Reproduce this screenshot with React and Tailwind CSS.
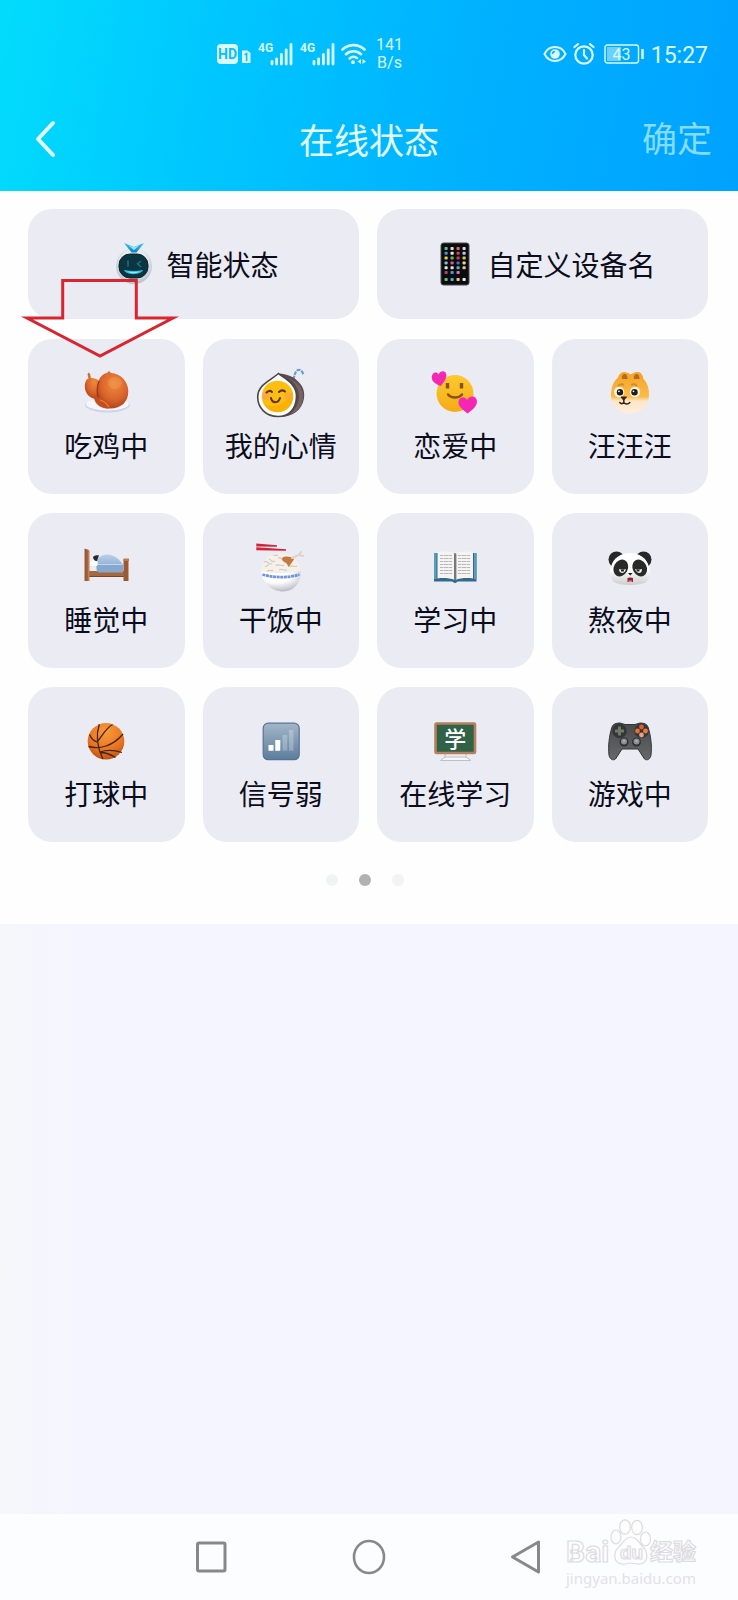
import React, { useState } from 'react';
import { clsx } from 'clsx';

const statuses = [
    { label: '吃鸡中', Icon: ChickenIcon },
    { label: '我的心情', Icon: MoodIcon },
    { label: '恋爱中', Icon: LoveIcon },
    { label: '汪汪汪', Icon: DogIcon },
    { label: '睡觉中', Icon: BedIcon },
    { label: '干饭中', Icon: RiceIcon },
    { label: '学习中', Icon: BookIcon },
    { label: '熬夜中', Icon: PandaIcon },
    { label: '打球中', Icon: BallIcon },
    { label: '信号弱', Icon: WeakSignalIcon },
    { label: '在线学习', Icon: BoardIcon },
    { label: '游戏中', Icon: GamepadIcon },
];

export default function App() {
    const [page, setPage] = useState(1);

    return (
        <div className="flex min-h-screen flex-col bg-[#f5f6fd] font-['Roboto','Noto_Sans_CJK_SC',sans-serif]">
            <header className="bg-[linear-gradient(100deg,#02dcfc_0%,#00c6ff_30%,#00b2ff_62%,#00a2ff_100%)] text-white">
                <StatusBar />
                <div className="grid h-[101px] grid-cols-3 items-center px-[26px]">
                    <button aria-label="返回" className="justify-self-start px-2 pb-1">
                        <svg width="22" height="38" viewBox="0 0 22 38" fill="none" stroke="#e6fdff" strokeWidth="4" strokeLinecap="round" strokeLinejoin="round">
                            <path d="M19 3 4 19l15 16" />
                        </svg>
                    </button>
                    <h1 className="pt-1 text-center text-[35px] leading-[48px] whitespace-nowrap text-[#e6fdff]">在线状态</h1>
                    <button className="justify-self-end text-[35px] leading-[48px] text-[#86dcff]">确定</button>
                </div>
            </header>

            <main className="relative bg-[#fefefe] pt-[18px] pr-[30px] pb-[38px] pl-7">
                <div className="grid grid-cols-2 gap-[18px]">
                    <WideCard label="智能状态" Icon={RobotIcon} />
                    <WideCard label="自定义设备名" Icon={PhoneIcon} />
                </div>
                <div className="mt-5 grid grid-cols-4 gap-x-[18px] gap-y-[19px]">
                    {statuses.map(({ label, Icon }) => (
                        <button key={label} className="flex h-[155px] flex-col items-center gap-3 rounded-3xl bg-[#ebecf3] pt-[30px] text-[#0b0d1c]">
                            <Icon />
                            <span className="text-[28px] leading-[38px] whitespace-nowrap">{label}</span>
                        </button>
                    ))}
                </div>
                <div className="mt-8 flex justify-center gap-[21px] pr-1.5">
                    {[0, 1, 2].map((i) => (
                        <button
                            key={i}
                            aria-label={`第${i + 1}页`}
                            onClick={() => setPage(i)}
                            className={clsx('size-3 rounded-full', i === page ? 'bg-[#b1b1b3]' : 'bg-[#f2f3f3]')}
                        />
                    ))}
                </div>
                <PointerArrow />
            </main>

            <div className="flex-1 bg-linear-to-r from-[#f6f7fb] to-[#f4f5fe] to-10%" />

            <NavBar />
        </div>
    );
}

function StatusBar() {
    return (
        <div className="flex h-[90px] items-center justify-between pt-[17px] pr-[30px] pl-[217px] text-[#d9fbff]">
            <div className="flex items-center">
                <span className="flex h-5 w-[21px] items-center justify-center rounded-sm bg-[#d9fbff] text-sm font-bold text-[#12b9fb]">HD</span>
                <svg className="ml-[3px]" width="10" height="20" viewBox="0 0 10 20">
                    <path d="M1 6.5h5.5L9.5 9v10H1z" fill="#d9fbff" />
                    <path d="M3.6 10.7 5.6 9.6V17" fill="none" stroke="#12b9fb" strokeWidth="1.6" />
                </svg>
                <Signal />
                <Signal />
                <svg className="ml-1.5" width="25" height="22" viewBox="0 0 25 22" fill="none" stroke="currentColor" strokeWidth="2.6" strokeLinecap="round">
                    <path d="M1.5 6.5a16 16 0 0 1 22 0M5 11.2a11 11 0 0 1 15 0M8.6 15.4a6 6 0 0 1 7.4-.4" />
                    <circle cx="12" cy="19.2" r="1.9" fill="currentColor" stroke="none" />
                    <path d="M20 16v5l-3.5-2.5zM21.5 16v5l3.5-2.5z" fill="currentColor" stroke="none" />
                </svg>
                <div className="ml-2.5 text-center text-base leading-[18px]">
                    <div>141</div>
                    <div>B/s</div>
                </div>
            </div>
            <div className="flex items-center">
                <svg width="24" height="20" viewBox="0 0 24 20" fill="none" stroke="currentColor" strokeWidth="2">
                    <path d="M1.5 10C6 .8 18 .8 22.5 10 18 19.2 6 19.2 1.5 10z" />
                    <circle cx="12" cy="10" r="4.8" fill="currentColor" stroke="none" />
                    <path d="M9.5 10A2.5 2.5 0 0 1 12 7.5" stroke="#06aefe" strokeWidth="1.4" />
                </svg>
                <svg className="ml-1.5" width="22" height="24" viewBox="0 0 22 24" fill="none" stroke="currentColor" strokeWidth="2.2" strokeLinecap="round">
                    <circle cx="11" cy="13" r="8.7" />
                    <path d="M11 8v5l3 3.5M1.5 5 5 2.2M20.5 5 17 2.2" />
                </svg>
                <svg className="ml-[9px]" width="41" height="20" viewBox="0 0 41 20">
                    <rect x="1" y="1" width="33.5" height="18" rx="2.5" fill="none" stroke="currentColor" strokeWidth="1.4" />
                    <rect x="3" y="3" width="14" height="14" fill="#6fcfff" />
                    <path d="M38.5 5v10" stroke="currentColor" strokeWidth="2.5" />
                    <text x="17.5" y="15.5" textAnchor="middle" fontSize="16" fontFamily="Roboto, sans-serif" fill="currentColor">43</text>
                </svg>
                <span className="ml-1.5 pt-1 text-[23px] leading-7">15:27</span>
            </div>
        </div>
    );
}

function Signal() {
    return (
        <svg className="ml-1.5 overflow-visible" width="36" height="24" viewBox="0 0 36 24">
            <text x="1" y="10" fontSize="12" fontWeight="700" fontFamily="Roboto, sans-serif" fill="currentColor">4G</text>
            <path d="M15 19.5V22M19.6 17v5M24.4 12.5V22M29.2 8v14M34 2.5V22" stroke="currentColor" strokeWidth="2.8" strokeLinecap="round" />
        </svg>
    );
}

function WideCard({ label, Icon }) {
    return (
        <button className="flex h-[110px] items-center justify-center gap-2.5 rounded-3xl bg-[#ebecf3] pl-1 text-[#0b0d1c]">
            <Icon />
            <span className="pt-1.5 text-[28px] leading-[38px] whitespace-nowrap">{label}</span>
        </button>
    );
}

function PointerArrow() {
    return (
        <svg className="pointer-events-none absolute top-[86px] left-[22px] overflow-visible" width="156" height="84" viewBox="0 0 156 84" fill="none" stroke="#d9252f" strokeWidth="3" strokeMiterlimit="10">
            <path d="M40.7 3.500h73.6v37.500H151L78 79 5 41h35.700z" />
        </svg>
    );
}

function NavBar() {
    return (
        <nav className="relative flex h-[86px] items-center justify-center gap-[123px] bg-[#fcfdff] text-[#88888a]">
            <button aria-label="最近任务">
                <svg width="34" height="36" viewBox="0 0 34 36" fill="none" stroke="currentColor" strokeWidth="3">
                    <rect x="2.5" y="4" width="27.5" height="28" rx="1.5" />
                </svg>
            </button>
            <button aria-label="主屏幕">
                <svg width="34" height="36" viewBox="0 0 34 36" fill="none" stroke="currentColor" strokeWidth="2.6">
                    <ellipse cx="17" cy="18" rx="15" ry="16" />
                </svg>
            </button>
            <button aria-label="后退">
                <svg width="34" height="36" viewBox="0 0 34 36" fill="none" stroke="currentColor" strokeWidth="3" strokeLinejoin="round">
                    <path d="M29.5 3v30L3.5 18z" />
                </svg>
            </button>
            <Watermark />
        </nav>
    );
}

function Watermark() {
    return (
        <div className="absolute right-10 bottom-3 w-[132px] font-['Noto_Sans','Noto_Sans_CJK_SC',sans-serif]">
            <svg className="overflow-visible" width="132" height="51" viewBox="0 0 132 51" stroke="#dcdcdf" strokeWidth="1.2" fill="#fdfdfe">
                <text x="0" y="45" fontSize="30" fontWeight="700" fontFamily="Roboto, sans-serif">Bai</text>
                <ellipse cx="50" cy="20" rx="5" ry="7" />
                <ellipse cx="59" cy="10" rx="5.3" ry="7.2" />
                <ellipse cx="71" cy="10.5" rx="5.3" ry="7.2" />
                <ellipse cx="79.5" cy="22" rx="5" ry="7" />
                <path d="M65 20c6 0 8 6 12 10 5 5 6 16-3 17-4 .5-6-1-9-1s-5 1.5-9 1c-9-1-9-12-3-17 4-4 6-10 12-10z" />
                <text x="54" y="42" fontSize="19" fontWeight="700" fontFamily="'Liberation Sans', sans-serif">du</text>
                <text x="84" y="43" fontSize="23" fontWeight="700" fontFamily="'Noto Sans CJK SC', sans-serif">经验</text>
            </svg>
            <a href="#jingyan" className="block text-[15px] leading-5 text-[#e2e2e5]">jingyan.baidu.com</a>
        </div>
    );
}

function IconFrame({ children }) {
    return (
        <svg width="48" height="48" viewBox="0 0 48 48" fill="none" className="shrink-0 overflow-visible" aria-hidden="true">
            {children}
        </svg>
    );
}

function RobotIcon() {
    return (
        <svg width="44" height="44" viewBox="0 0 44 44" className="shrink-0" aria-hidden="true">
            <defs>
                <radialGradient id="robotHead" cx=".5" cy=".4" r=".6">
                    <stop offset=".6" stopColor="#e6edf1" />
                    <stop offset="1" stopColor="#b3bfc9" />
                </radialGradient>
                <linearGradient id="robotHorn" x2="0" y2="1">
                    <stop stopColor="#36c3f2" />
                    <stop offset="1" stopColor="#157fc0" />
                </linearGradient>
            </defs>
            <circle cx="22" cy="24" r="18" fill="url(#robotHead)" />
            <path d="M12 1 22 5l10-4-7.500 9.500h-5z" fill="url(#robotHorn)" />
            <path d="m16 3 6 5 6-5-6 2.200z" fill="#8fe7ff" />
            <rect x="7" y="12" width="29" height="24" rx="11" fill="#0b3540" stroke="#12242c" />
            <path d="M16 18.500v6M29 19l-3.500 2.700L29 25" fill="none" stroke="#23717f" strokeWidth="1.5" />
            <path d="M12 28q10 2 19 0c-2 5.500-17 5.500-19 0z" fill="#31c5ec" />
            <path d="M16 29.500q6 1.500 11 0c-2 2-9 2-11 0z" fill="#a9f4ff" />
        </svg>
    );
}

const appColors = [
    ['#4ac38b', '#e9d7c8', '#dc6a5b', '#d9d6e6'],
    ['#4a8fd6', '#e6e6e6', '#c84656', '#b5c7e6'],
    ['#e5cf4b', '#6fae5d', '#b84848', '#dcc25d'],
    ['#6fc4dd', '#e0578d', '#5468c7', '#e8e06b'],
    ['#dfe9d5', '#e7dfd2', '#4eb5a8', '#e2ca8c'],
    ['#a0497d', '#4a98ce', '#df6ac5', null],
    ['#62c26c', '#4faed5', '#e5c685', '#eeeeee'],
];

function PhoneIcon() {
    return (
        <svg width="44" height="44" viewBox="0 0 44 44" className="shrink-0" aria-hidden="true">
            <rect x="8" y="1" width="28" height="42" rx="2.5" fill="#0b0b10" stroke="#4a4a50" />
            {appColors.map((row, r) =>
                row.map((color, c) =>
                    color && (
                        <rect key={`${r}-${c}`} x={11.5 + c * 6} y={r === 6 ? 36 : 5 + r * 4.8} width="3.2" height="3" rx=".8" fill={color} />
                    )
                )
            )}
        </svg>
    );
}

function ChickenIcon() {
    return (
        <IconFrame>
            <defs>
                <radialGradient id="roast" cx=".55" cy=".35" r=".7">
                    <stop stopColor="#ef8b3d" />
                    <stop offset=".6" stopColor="#d9632b" />
                    <stop offset="1" stopColor="#aa4019" />
                </radialGradient>
            </defs>
            <ellipse cx="25.5" cy="36" rx="22.5" ry="7.5" fill="#cfd3e6" />
            <ellipse cx="25.5" cy="35" rx="21.5" ry="6.5" fill="#f6f6fb" />
            <path d="M5.5 5 7 3.500l1 1.500 1 4c7 0 10 4 11 10 0 6-2 10-5 11C8 30 2.500 24 2.800 17 3 13 4.500 10 6.500 9.500z" fill="url(#roast)" />
            <path d="M16 14C18 6.500 22 4.500 25 4l2-2 2 2c10 .5 17.300 9 17.300 18 0 11-7 17.500-18 17.500-7 0-12-3-13-9-1-6-.3-12 .7-16.500z" fill="url(#roast)" />
            <path d="M17 12c-2.500 7-2.500 13 .5 18.500" stroke="#9a3516" strokeWidth="1.2" />
            <path d="M12 28c6-1 11 3 16 9 1 2-2 3-4 2.500C18 39 12 34 12 28z" fill="#c54e20" />
            <path d="M18 31c4 1 7 4 9 7" stroke="#e88342" strokeWidth="1.2" />
            <ellipse cx="33" cy="14" rx="7" ry="6" fill="#f7a45c" opacity=".35" />
        </IconFrame>
    );
}

function MoodIcon() {
    return (
        <IconFrame>
            <path d="M36 11c2-5 2-9 5-10s4 2 6 5" stroke="#6e9bd0" strokeWidth="2.2" strokeDasharray="4 1" />
            <path d="M22 4.500c8 .5 14 3 18 7 6 5 8 11 7 18-2 12-12 18.500-24 18.500C12 48 13 20 22 4.500z" fill="#5c4c4e" />
            <path d="M30 9c8 3 12 11 12 19 0 7-4 13-9 17 8-2 12-8 13-16 1-9-5-17-16-20z" fill="#766366" />
            <path d="M21.500 4.500C26 9 40 14 39.500 28 39 40 32 47.500 21 47.500 9 47.500.7 39 .7 28c0-12 12-16 20.800-23.500z" fill="#fff" stroke="#4b4547" strokeWidth="1.6" />
            <circle cx="20.5" cy="27.5" r="15.8" fill="#fdbe12" />
            <path d="M35 22c3 11-4 21-14 21-6 0-11-3-14-8 11 5 23 0 28-13z" fill="#f7a900" opacity=".6" />
            <ellipse cx="9" cy="27" rx="4" ry="4" fill="#ff9d55" opacity=".7" />
            <ellipse cx="31" cy="27" rx="3.5" ry="3.5" fill="#ff9d55" opacity=".6" />
            <path d="M9.500 23.500q3-3 5.500-.5M22 23q3-3 6-.5M14 29c1 5.500 7.500 5.500 9 0" stroke="#5c3518" strokeWidth="2" strokeLinecap="round" />
        </IconFrame>
    );
}

function LoveIcon() {
    return (
        <IconFrame>
            <defs>
                <linearGradient id="loveFace" x2="0" y2="1">
                    <stop stopColor="#fdc92e" />
                    <stop offset="1" stopColor="#f4ab17" />
                </linearGradient>
            </defs>
            <circle cx="24" cy="24.5" r="18.5" fill="url(#loveFace)" />
            <path d="M16.500 14v5.500M30.500 14v5.500" stroke="#8a5210" strokeWidth="3.4" />
            <path d="M17 25.500c3 4 11 4 14 0" stroke="#8a5210" strokeWidth="2.4" strokeLinecap="round" />
            <path d="M9.500 17C4.500 15 0 12 .8 7.500 1.500 3 6 2.500 7.500 5.500c1.500-4 6.500-4.500 7.500-1C16.500 8 13.500 13 9.500 17z" fill="#f526b4" />
            <path d="M36.500 44.500C31 40 26 36.500 27.800 31.500c1.700-4.500 6.700-4 8.200-.5 2-4.500 8.500-5 9.800 0 1.200 5-3.800 10-9.300 13.500z" fill="#f526b4" />
        </IconFrame>
    );
}

function DogIcon() {
    return (
        <IconFrame>
            <defs>
                <linearGradient id="dogFur" x2="0" y2="1">
                    <stop offset=".1" stopColor="#f6a62a" />
                    <stop offset=".6" stopColor="#fbbb4c" />
                    <stop offset=".7" stopColor="#fde6c8" />
                    <stop offset="1" stopColor="#fdeedd" />
                </linearGradient>
            </defs>
            <path d="M12 8.500c1-3.500 3.500-6 6.500-5.500s4.500 1.500 6 2.500c2-1.200 4.500-3 7.500-2.500 3.500.5 5 3.500 5.500 7 4 4 5.500 9.500 5.500 15.500 0 11-7.500 18.800-19 18.800S5 37 5 26.500C5 18.500 7 13 12 8.500z" fill="url(#dogFur)" />
            <path d="M16 10c-.5-3.500 1-5 2.800-5s2.700 2 2.700 5zM28 10c-.5-3.500 1-5 2.800-5s2.700 2 2.700 5z" fill="#b56b1d" />
            <path d="M12 17q3-3 6-1M25 16q4-2 6 1" stroke="#c98f2c" strokeWidth="2" />
            <circle cx="13.2" cy="23" r="5.2" fill="#fff5df" />
            <circle cx="29" cy="23" r="5.2" fill="#fff5df" />
            <circle cx="14" cy="23.3" r="3.2" fill="#1f1a19" />
            <circle cx="28.5" cy="23.3" r="3.2" fill="#1f1a19" />
            <circle cx="13" cy="22.3" r=".9" fill="#fff" />
            <circle cx="27.5" cy="22.3" r=".9" fill="#fff" />
            <path d="M15 28h5.500l-2.800 3.200z" fill="#37221b" stroke="#37221b" strokeLinejoin="round" />
            <path d="M17.800 31v2.500c-1 1.500-3 1.500-4 0M17.800 33.500c1.500 2 4.500 2 6 0" stroke="#37221b" strokeWidth="1.5" strokeLinecap="round" />
        </IconFrame>
    );
}

function BedIcon() {
    return (
        <IconFrame>
            <defs>
                <linearGradient id="blanket" x2="0" y2="1">
                    <stop stopColor="#b9d0ea" />
                    <stop offset="1" stopColor="#7e9fc6" />
                </linearGradient>
            </defs>
            <path d="M7 19h9v9H7z" fill="#e9edf5" />
            <path d="M7 28h35v6H7z" fill="#a8683f" />
            <path d="M7 33.500h35" stroke="#7b4423" />
            <path d="M14 22c1-7 5-10.500 11-10.500 8 0 13 5.500 16 10.500v7H15z" fill="url(#blanket)" />
            <path d="M15 22h26v7.500H17z" fill="#86a8d0" />
            <path d="M15 21.500h25" stroke="#c4d8ee" />
            <path d="M8 19c2-2 5-2 8 0l-1 4H8z" fill="#fff" />
            <path d="M11 14c1-1.500 4-2 6-1.500l-2 5.500c-2 .5-4-2-4-4z" fill="#2c2a2e" />
            <path d="M2.500 5.500 7 7v31H2.500z" fill="#9b5a36" />
            <path d="M5.700 6.500 7.500 8v30H5.700z" fill="#c08055" />
            <path d="M41.500 16h5v22h-5z" fill="#9b5a36" />
            <path d="M41.500 15.500h5.500V18h-5.500z" fill="#bd7b50" />
        </IconFrame>
    );
}

function RiceIcon() {
    return (
        <IconFrame>
            <defs>
                <radialGradient id="bowl" cx=".4" cy=".2" r=".9">
                    <stop offset=".4" stopColor="#fff" />
                    <stop offset="1" stopColor="#a9adba" />
                </radialGradient>
            </defs>
            <path d="M4 29c-1-8 3-9 5-12 3-6 9-8 15-6 5-1 9 0 12 4 5 3 8 7 7 14z" fill="#f5f0ea" />
            <path d="M8 23c3 2 3-4 7-2M12 16c3 1 2 4 6 2M21 15c3-2 4 2 6 3M19 23c2-3 6 1 8-1M33 24c2-3 5 1 7-1M10 28c2-2 4 1 6-1M22 27c3-2 5 1 8 0M7 19c2-1 3 0 5 1M16 12c2 0 4 1 5 0" stroke="#d3c9bd" strokeWidth="1.2" />
            <path d="M4 28c12 3 28 3 40 0 0 12-7 20.500-18 20.500S5 40 4 28z" fill="url(#bowl)" />
            <path d="M5.500 31.500c12 3.500 26 3.500 37 0" stroke="#7195d6" strokeWidth="2.8" strokeDasharray="3 .6" />
            <path d="M25 15c3-2 8-2 12 1-1 3-4 5-5 8-2-1-1-3-3-4s-4-2-4-5z" fill="#c5793e" />
            <path d="m35 15 7-3 2-3M42 12l4 1" stroke="#ded3c8" strokeWidth="2" strokeLinecap="round" />
            <path d="M-.7.5 20 2.200v1.500L-.7 3.500zM-.7 4.200 29 6.300v1.400L-.7 7.200z" fill="#cf2338" />
        </IconFrame>
    );
}

function BookIcon() {
    return (
        <IconFrame>
            <path d="M3 10h42.500v28.500H27l-3 1.800-3-1.800H3z" fill="#35698a" />
            <path d="M3 10h2.500v26H3zM43 10h2.500v26H43z" fill="#5d9bbd" />
            <path d="M6.500 9c6-1 12-1 17.500 1.500C29.500 8 35.500 8 42 9v26.500c-6-1-12-.5-18 1.500-6-2-11.500-2.500-17.500-1.500z" fill="#f5f4f2" />
            <path d="M9 12.500h12.500M9 15.500h12.500M9 18.500h12.500M9 21.500h12.500M9 24.500h12.500M9 27.500h12.500M9 30.500h12.500M27 12.500h12.500M27 15.500h12.500M27 18.500h12.500M27 21.500h12.500M27 24.500h12.500M27 27.500h12.500M27 30.500h12.500" stroke="#b8b8ba" strokeDasharray="3 .6 5 .5" />
            <path d="M24 10.500V37" stroke="#77777c" strokeWidth="2" />
            <path d="M25.500 11v25" stroke="#c4c4c8" />
        </IconFrame>
    );
}

function PandaIcon() {
    return (
        <IconFrame>
            <defs>
                <linearGradient id="pandaFace" x2="0" y2="1">
                    <stop offset=".5" stopColor="#fff" />
                    <stop offset="1" stopColor="#cdcdca" />
                </linearGradient>
            </defs>
            <circle cx="10.5" cy="16.5" r="8" fill="#252729" />
            <circle cx="37.5" cy="16.5" r="8" fill="#252729" />
            <path d="M5 24c2-9 10-14 19-14s17 5 19 14c2 5 1 12-3 15-5 4-27 4-32 0-4-3-5-10-3-15z" fill="url(#pandaFace)" />
            <ellipse cx="14.8" cy="25" rx="7" ry="8.7" transform="rotate(28 14.8 25)" fill="#2a2a2b" />
            <ellipse cx="33.7" cy="25" rx="7" ry="8.7" transform="rotate(-28 33.7 25)" fill="#2a2a2b" />
            <path d="M13 26q4 1 7 0-1 4-4 4-3-.5-3-4zM29 26q3 1 7 0 0 4-3 4-3-.5-4-4z" fill="#f5f5ef" />
            <path d="M15 26.500h3v2h-3zM30.500 26.500h3v2h-3z" fill="#2a2a2b" />
            <path d="M22 30h4.500l-2.200 2.500z" fill="#1f1f20" />
            <path d="M21.500 35q2.500-1 5.500 0v4h-5.500z" fill="#8f2335" />
            <path d="M22.500 37.500h3.500V39h-3.500z" fill="#f07a87" />
        </IconFrame>
    );
}

function BallIcon() {
    return (
        <IconFrame>
            <defs>
                <radialGradient id="ball" cx=".5" cy=".25" r=".8">
                    <stop stopColor="#f99a3b" />
                    <stop offset=".6" stopColor="#e97522" />
                    <stop offset="1" stopColor="#b94c10" />
                </radialGradient>
            </defs>
            <circle cx="24" cy="24.3" r="18.3" fill="url(#ball)" />
            <path d="M17.300 7.300c-3 9-3 21 3.500 34.700M30.500 7.500C24 11 20 19 15 25c-3-1-6-4-7.500-7.500M41 17c-5 6-11 10-17 12-6 2-12 2-17.500.5M18 35c6-2 14-2 22 .5M18.500 35.500c6 0 11 2.500 15 5" stroke="#402514" strokeWidth="1.3" />
        </IconFrame>
    );
}

function WeakSignalIcon() {
    return (
        <IconFrame>
            <defs>
                <linearGradient id="weak" x2="0" y2="1">
                    <stop stopColor="#a3b6ca" />
                    <stop offset="1" stopColor="#5c7c9d" />
                </linearGradient>
            </defs>
            <rect x="6.2" y="6.2" width="36" height="36.5" rx="5" fill="url(#weak)" stroke="#587390" strokeWidth="1.2" />
            <path d="M11.500 28h5v5.700h-5zM18.300 23h5v10.700h-5z" fill="#fff" />
            <path d="M25.500 18h4.800v15.700h-4.800z" fill="#fff" opacity=".25" />
            <path d="M32 13h4.500v20.700H32z" fill="#fff" opacity=".25" />
        </IconFrame>
    );
}

function BoardIcon() {
    return (
        <IconFrame>
            <path d="M14 36v5M35 36v5M14 40h21l5 3.500H9.500z" fill="#f7f7f9" stroke="#bdbfc6" />
            <rect x="4.5" y="6.5" width="39.5" height="29.5" rx="1" fill="#2f6247" stroke="#b6805f" strokeWidth="2.6" />
            <text x="24.3" y="29.5" textAnchor="middle" fontSize="22" fontWeight="500" fontFamily="'Noto Sans CJK SC', sans-serif" fill="#fff">学</text>
        </IconFrame>
    );
}

function GamepadIcon() {
    return (
        <IconFrame>
            <defs>
                <linearGradient id="pad" x2="0" y2="1">
                    <stop stopColor="#48494a" />
                    <stop offset="1" stopColor="#66686a" />
                </linearGradient>
            </defs>
            <path d="M6 10c1-3 4-4 8-4l5 1.500h10L34 6c4 0 7 1 8 4 3 9 4 20 3 28-.5 4-4 6-6.500 4L32 32H16l-6.500 10c-2.500 2-6 0-6.500-4-1-8 0-19 3-28z" fill="url(#pad)" stroke="#333435" />
            <circle cx="13.5" cy="14" r="7.2" fill="#343536" />
            <circle cx="35.5" cy="14" r="7.2" fill="#343536" />
            <path d="M13.500 9.500v9M9 14h9" stroke="#717a68" strokeWidth="3" />
            <circle cx="35.5" cy="10" r="2.4" fill="#e55a2e" />
            <circle cx="39.5" cy="14" r="2.4" fill="#e8803c" />
            <circle cx="31.5" cy="14" r="2.4" fill="#ef6c38" />
            <circle cx="35.5" cy="18" r="2.4" fill="#e7a184" />
            <circle cx="18" cy="25" r="4.5" fill="#303132" />
            <circle cx="30.5" cy="25" r="4.5" fill="#303132" />
            <circle cx="18" cy="24.5" r="3" fill="#8d9093" />
            <circle cx="30.5" cy="24.5" r="3" fill="#8d9093" />
            <path d="M17 24h2M29.500 24h2" stroke="#c8caca" />
        </IconFrame>
    );
}
